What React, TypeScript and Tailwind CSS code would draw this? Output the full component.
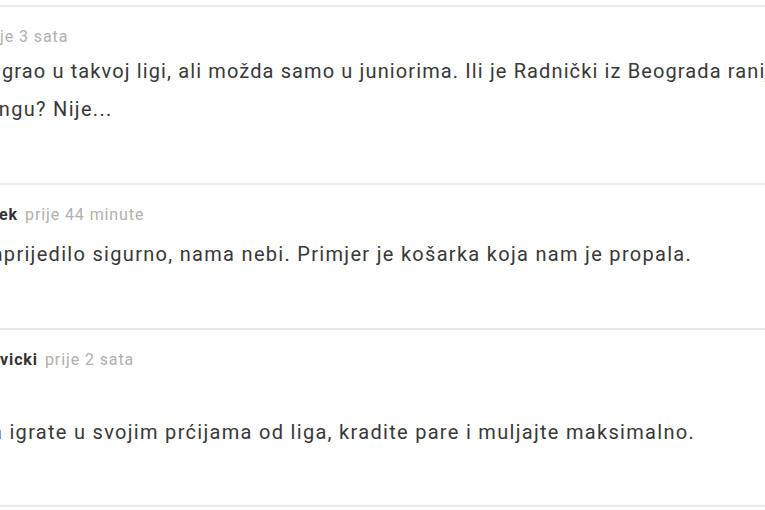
type Comment = {
  author: string;
  time: string;
  metaOffset: string;
  lines: { text: string; offset: string }[];
  spacing: string;
  bodyGap: string;
  blankFirst?: boolean;
};

const comments: Comment[] = [
  {
    author: '',
    time: 'prije 3 sata',
    metaOffset: '-ml-[21px]',
    spacing: 'pt-[18px] pb-[55px]',
    bodyGap: 'mt-[3px]',
    lines: [
      {
        text: 'igrao u takvoj ligi, ali možda samo u juniorima. Ili je Radnički iz Beograda ranije',
        offset: '-ml-[4px] tracking-[1.12px]',
      },
      { text: 'rangu? Nije...', offset: '-ml-[21px]' },
    ],
  },
  {
    author: 'ek',
    time: 'prije 44 minute',
    metaOffset: '-ml-[1px]',
    spacing: 'pt-[18px] pb-[55px]',
    bodyGap: 'mt-[8px]',
    lines: [{ text: 'unaprijedilo sigurno, nama nebi. Primjer je košarka koja nam je propala.', offset: '-ml-[33px]' }],
  },
  {
    author: 'vicki',
    time: 'prije 2 sata',
    metaOffset: 'ml-0',
    spacing: 'pt-[18px] pb-[54px]',
    bodyGap: 'mt-[3px]',
    blankFirst: true,
    lines: [{ text: 'a igrate u svojim prćijama od liga, kradite pare i muljajte maksimalno.', offset: '-ml-[9px]' }],
  },
];

function CommentItem({ c }: { c: Comment }) {
  return (
    <div className={`border-t-2 border-[#ebebeb] ${c.spacing}`}>
      <div className={`${c.metaOffset} whitespace-nowrap text-[16px] leading-[24px] tracking-[0.9px]`}>
        {c.author && <span className="mr-[7px] font-bold text-[#333333]">{c.author}</span>}
        <span className="text-[#b0b0b0]">{c.time}</span>
      </div>
      <div className={`${c.bodyGap} text-[20px] leading-[38px] tracking-[1.3px] text-[#383838]`}>
        {c.blankFirst && <div className="h-[38px]" />}
        {c.lines.map((l) => (
          <div key={l.text} className={`${l.offset} whitespace-nowrap`}>
            {l.text}
          </div>
        ))}
      </div>
    </div>
  );
}

export default function App() {
  return (
    <div className="h-[510px] w-full overflow-hidden bg-white pt-[5px] font-['Roboto',sans-serif]">
      {comments.map((c, i) => (
        <CommentItem key={i} c={c} />
      ))}
      <div className="border-t-2 border-[#ebebeb]" />
    </div>
  );
}
